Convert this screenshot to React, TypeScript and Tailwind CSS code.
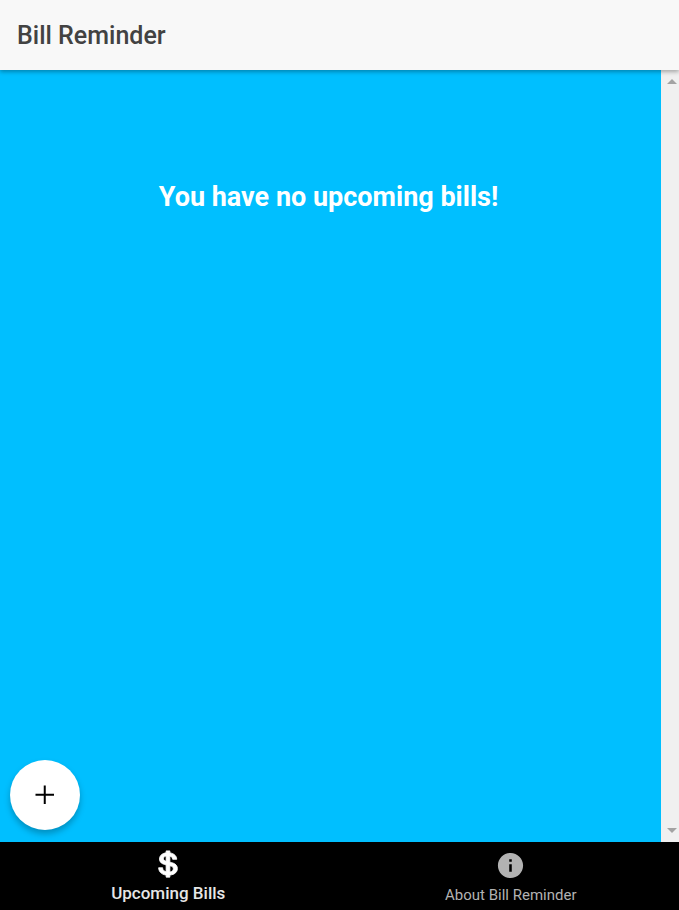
import { IoLogoUsd, IoMdInformationCircle } from "react-icons/io";

function ScrollTrack() {
  return (
    <div aria-hidden="true" className="flex w-[18px] shrink-0 flex-col items-center justify-between bg-[#f0f0f0] py-2">
      <svg className="ml-1 h-[6px] w-[10px]" viewBox="0 0 10 6" fill="#a3a3a3">
        <path d="M0 6 5 1l5 5z" />
      </svg>
      <svg className="ml-1 h-[6px] w-[10px]" viewBox="0 0 10 6" fill="#a3a3a3">
        <path d="M0 0 5 5l5-5z" />
      </svg>
    </div>
  );
}

export default function App() {
  return (
    <div className="flex h-screen flex-col bg-[#00bfff] font-['Roboto',sans-serif]">
      <header className="z-10 flex h-[70px] shrink-0 items-center bg-[#f8f8f8] px-[17px] pt-[2px] shadow-[0_2px_4px_rgba(0,0,0,0.3)]">
        <h1 className="text-[25px] leading-[30px] font-medium text-[#424242]">Bill Reminder</h1>
      </header>
      <div className="relative flex min-h-0 flex-1">
        <main className="flex-1 pt-[109px] pr-5 pl-4 text-center">
          <h2 className="text-[27px] leading-9 font-bold text-white">You have no upcoming bills!</h2>
        </main>
        <ScrollTrack />
        <button
          type="button"
          aria-label="Add bill"
          className="absolute bottom-3 left-[10px] flex size-[70px] items-center justify-center rounded-full bg-white text-black shadow-[0_4px_6px_rgba(0,0,0,0.25)]"
        >
          <svg className="size-5" viewBox="0 0 20 20" fill="none" stroke="currentColor" strokeWidth="2">
            <path d="M9.75 .5v18.5M.5 9.75h18.5" />
          </svg>
        </button>
      </div>
      <nav className="grid h-[68px] shrink-0 grid-cols-2 gap-1.5 bg-black">
        <a href="#bills" className="flex flex-col items-center pt-[7px] text-white">
          <IoLogoUsd className="size-[30px] stroke-current stroke-[14px]" />
          <span className="text-[17px] leading-7 font-medium text-[#e6e6e6]">Upcoming Bills</span>
        </a>
        <a href="#about" className="flex flex-col items-center pt-2 text-[#b2b2b2]">
          <IoMdInformationCircle className="size-[31px]" />
          <span className="text-[15px] leading-7">About Bill Reminder</span>
        </a>
      </nav>
    </div>
  );
}
